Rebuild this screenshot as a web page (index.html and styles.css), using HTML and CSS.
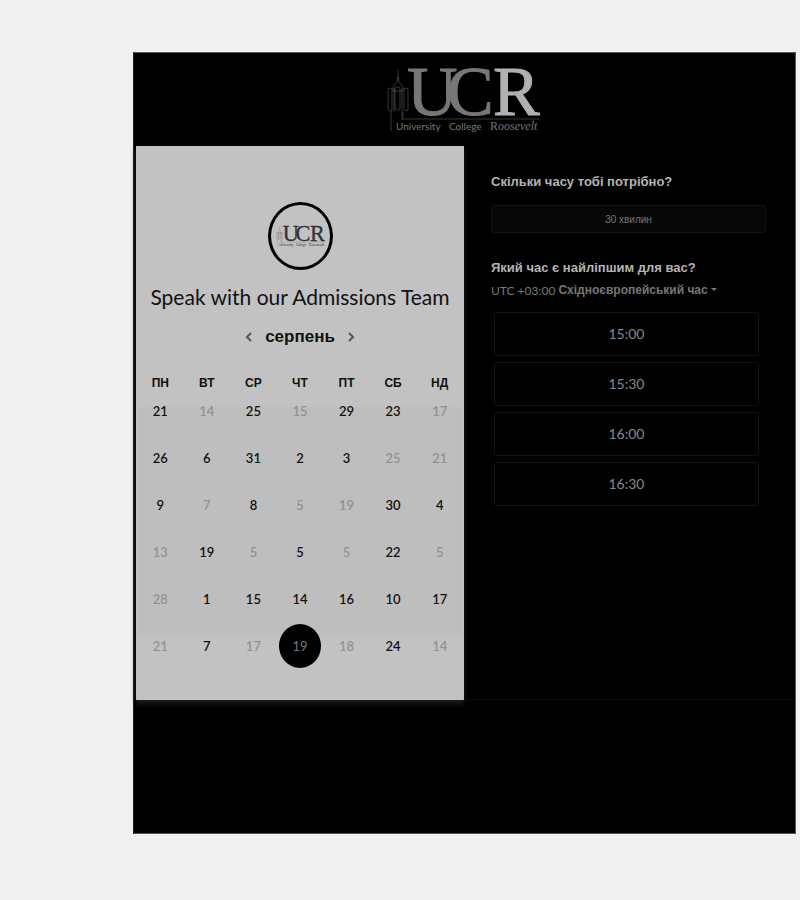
FILE: index.html
```html
<!DOCTYPE html>
<html lang="uk">
<head>
<meta charset="utf-8">
<meta name="viewport" content="width=device-width, initial-scale=1">
<title>Speak with our Admissions Team</title>
<link rel="stylesheet" href="styles.css">
</head>
<body>
<main class="widget">
  <header class="brand">
    <svg class="brand-logo" viewBox="0 0 154 68" role="img" aria-label="University College Roosevelt">
      <g id="ucr">
        <g class="tower">
          <path d="M12 4v9M12 11l-1 5-4 5v4h10v-4l-4-5-1-5M8 22v24M16 22v32"/>
          <rect x="2" y="22" width="4" height="23" rx="2"/>
          <rect x="9" y="21" width="5" height="23" rx="2"/>
          <rect x="18" y="22" width="4" height="23" rx="2"/>
          <path d="M5 45v20M17 46v7h136"/>
        </g>
        <g class="letters">
          <text x="21" y="49">U</text>
          <text x="61" y="49">C</text>
          <text class="letter-r" x="107" y="49">R</text>
        </g>
        <g class="tagline">
          <text x="10" y="64">University</text>
          <text x="63" y="64">College</text>
          <text class="roosevelt" x="104" y="64">R<tspan class="slanted">oosevelt</tspan></text>
        </g>
      </g>
    </svg>
  </header>

  <div class="panels">
    <section class="calendar-panel">
      <div class="avatar">
        <svg class="avatar-logo" viewBox="0 0 154 68" aria-hidden="true"><use href="#ucr"/></svg>
      </div>
      <h1 class="title">Speak with our Admissions Team</h1>
      <div class="month">
        <button class="arrow" type="button" aria-label="Попередній місяць"><svg viewBox="0 0 8 12"><path d="M6 2 2 6l4 4"/></svg></button>
        <h2 class="month-name">серпень</h2>
        <button class="arrow" type="button" aria-label="Наступний місяць"><svg viewBox="0 0 8 12"><path d="m2 2 4 4-4 4"/></svg></button>
      </div>
      <table class="calendar">
        <thead>
          <tr><th>ПН</th><th>ВТ</th><th>СР</th><th>ЧТ</th><th>ПТ</th><th>СБ</th><th>НД</th></tr>
        </thead>
        <tbody>
          <tr>
            <td><button class="day">21</button></td><td><button class="day" disabled>14</button></td><td><button class="day">25</button></td><td><button class="day" disabled>15</button></td><td><button class="day">29</button></td><td><button class="day">23</button></td><td><button class="day" disabled>17</button></td>
          </tr>
          <tr>
            <td><button class="day">26</button></td><td><button class="day">6</button></td><td><button class="day">31</button></td><td><button class="day">2</button></td><td><button class="day">3</button></td><td><button class="day" disabled>25</button></td><td><button class="day" disabled>21</button></td>
          </tr>
          <tr>
            <td><button class="day">9</button></td><td><button class="day" disabled>7</button></td><td><button class="day">8</button></td><td><button class="day" disabled>5</button></td><td><button class="day" disabled>19</button></td><td><button class="day">30</button></td><td><button class="day">4</button></td>
          </tr>
          <tr>
            <td><button class="day" disabled>13</button></td><td><button class="day">19</button></td><td><button class="day" disabled>5</button></td><td><button class="day">5</button></td><td><button class="day" disabled>5</button></td><td><button class="day">22</button></td><td><button class="day" disabled>5</button></td>
          </tr>
          <tr>
            <td><button class="day" disabled>28</button></td><td><button class="day">1</button></td><td><button class="day">15</button></td><td><button class="day">14</button></td><td><button class="day">16</button></td><td><button class="day">10</button></td><td><button class="day">17</button></td>
          </tr>
          <tr>
            <td><button class="day" disabled>21</button></td><td><button class="day">7</button></td><td><button class="day" disabled>17</button></td><td><button class="day selected" aria-pressed="true">19</button></td><td><button class="day" disabled>18</button></td><td><button class="day">24</button></td><td><button class="day" disabled>14</button></td>
          </tr>
        </tbody>
      </table>
    </section>

    <section class="times-panel">
      <h2 class="question">Скільки часу тобі потрібно?</h2>
      <button class="duration" type="button">30 хвилин</button>
      <h2 class="question">Який час є найліпшим для вас?</h2>
      <div class="timezone">
        <label for="zone">UTC +03:00</label>
        <select id="zone"><option>Східноєвропейський час</option></select>
        <svg class="caret" viewBox="0 0 6 4" aria-hidden="true"><path d="M0 0h6L3 3z"/></svg>
      </div>
      <div class="slots">
        <button class="slot" type="button">15:00</button>
        <button class="slot" type="button">15:30</button>
        <button class="slot" type="button">16:00</button>
        <button class="slot" type="button">16:30</button>
      </div>
    </section>
  </div>
</main>
</body>
</html>
```
FILE: styles.css
```css
* {
  box-sizing: border-box;
}

body {
  margin: 0;
  padding: 52px 4px 66px 133px;
  background: #f1f1f1;
  font-family: "Liberation Sans", Arial, sans-serif;
}

h1,
h2 {
  margin: 0;
}

button,
select {
  margin: 0;
  padding: 0;
  border: 0;
  background: none;
  font-family: inherit;
}

.widget {
  padding: 0 0 133px 2px;
  border: 1px solid #555;
  border-left-color: #222;
  background: #000;
}

.brand {
  display: flex;
  justify-content: center;
  height: 93px;
  padding: 13px 5px 0 0;
}

.brand-logo {
  --accent: #b0b0b0;
  width: 154px;
  height: 68px;
  overflow: visible;
  color: #777;
}

.tower {
  fill: none;
  stroke: currentColor;
  stroke-opacity: 0.45;
}

.letters {
  fill: currentColor;
  stroke: currentColor;
  font: 70px "Liberation Serif", serif;
}

.letter-r {
  fill: var(--accent);
  stroke: var(--accent);
}

.tagline {
  fill: currentColor;
  font: 10px Lato, sans-serif;
}

.roosevelt {
  font-family: "Liberation Serif", serif;
  font-size: 12px;
}

.slanted {
  font-style: italic;
}

.panels {
  display: grid;
  grid-template-columns: 328fr 331fr;
}

.calendar-panel {
  display: flex;
  flex-direction: column;
  align-items: center;
  padding: 56px 1px 31px;
  background: #c2c2c2;
  box-shadow: 0 3px 5px #222;
}

.avatar {
  display: flex;
  align-items: center;
  justify-content: center;
  width: 65px;
  height: 68px;
  border: 3px solid #000;
  border-radius: 50%;
}

.avatar-logo {
  --accent: #333;
  width: 49px;
  height: 24px;
  overflow: visible;
  color: #333;
}

.title {
  margin-top: 12px;
  color: #111;
  font: 21px/30px Lato, sans-serif;
}

.month {
  display: flex;
  align-items: center;
  gap: 12px;
  margin-top: 13px;
}

.month-name {
  color: #111;
  font-size: 17px;
  line-height: 24px;
}

.arrow {
  width: 8px;
  height: 12px;
}

.arrow svg {
  display: block;
  fill: none;
  stroke: #555;
  stroke-width: 2;
}

.calendar {
  width: 100%;
  margin-top: 31px;
  border-collapse: collapse;
  table-layout: fixed;
}

.calendar th {
  padding: 0;
  color: #111;
  font-size: 12px;
  line-height: 7px;
}

.calendar tbody {
  background: linear-gradient(#c2c2c2 20px, #bebebe 20px, #bebebe 250px, #c2c2c2 250px);
}

.calendar td {
  height: 47px;
  padding: 0;
  text-align: center;
}

.day {
  width: 42px;
  height: 44px;
  border-radius: 50%;
  color: #111;
  font: 600 13px Lato, sans-serif;
}

.day:disabled {
  color: #929292;
}

.day.selected {
  background: #000;
  color: #777;
  font-weight: 400;
}

.times-panel {
  padding: 26px 29px 0 27px;
  border-bottom: 1px solid #0c0c0c;
}

.question {
  color: #b4b4b4;
  font-size: 13px;
  line-height: 20px;
}

.duration {
  display: block;
  width: 100%;
  height: 28px;
  margin: 13px 0 25px;
  border: 1px solid #141414;
  border-radius: 3px;
  background: #070707;
  color: #777;
  font-size: 10px;
}

.timezone {
  display: flex;
  align-items: center;
  gap: 3px;
  height: 24px;
  color: #777;
  font: 12px Lato, sans-serif;
}

.timezone select {
  appearance: none;
  color: #777;
  font: bold 12px "Liberation Sans", Arial, sans-serif;
}

.caret {
  width: 6px;
  height: 4px;
  fill: #777;
}

.slots {
  display: grid;
  gap: 6px;
  margin: 10px 7px 0 3px;
}

.slot {
  height: 44px;
  padding-bottom: 2px;
  border: 1px solid #141414;
  border-radius: 3px;
  color: #888;
  font: 14px Lato, sans-serif;
}
```
